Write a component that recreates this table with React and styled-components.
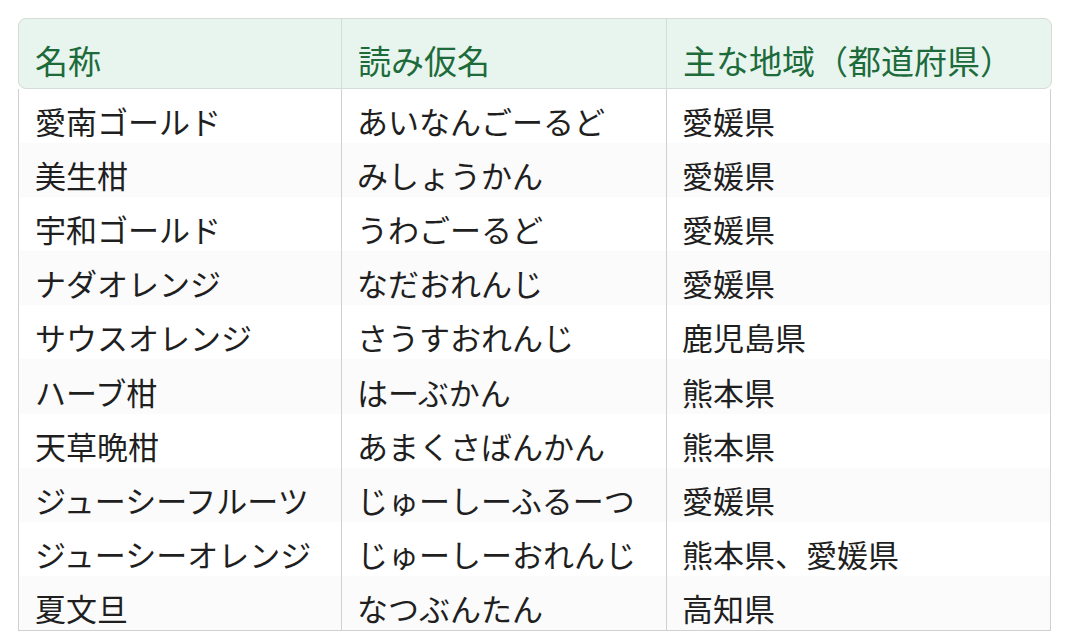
import React from "react";
import styled, { createGlobalStyle } from "styled-components";

const Global = createGlobalStyle`
  html, body { margin: 0; padding: 0; background: #ffffff; }
  body { font-family: "Noto Sans CJK JP", "Noto Sans", sans-serif; }
`;

const Page = styled.div`
  padding: 18px 17px 0 18px;
`;

const Table = styled.div`
  width: 1034px;
`;

const cols = "322px 325px 1fr";

const HeadRow = styled.div`
  display: grid;
  grid-template-columns: ${cols};
  height: 71px;
  box-sizing: border-box;
  border: 1px solid #d3dcd6;
  border-radius: 8px;
  background: #e8f5ee;
`;

const HeadCell = styled.div`
  display: flex;
  align-items: flex-end;
  padding: 0 0 5px 16px;
  font-size: 33px;
  line-height: 46px;
  color: #1d6b3b;
  border-left: ${(p) => (p.$first ? "none" : "1px solid #d3dcd6")};
  white-space: nowrap;
`;

const Body = styled.div`
  border: 1px solid #d0d0d0;
  border-top: none;
  margin-right: 1px;
`;

const Row = styled.div`
  display: grid;
  grid-template-columns: ${cols};
  height: 54.1px;
  background: ${(p) => (p.$striped ? "#fbfbfc" : "#ffffff")};
`;

const Cell = styled.div`
  display: flex;
  align-items: center;
  padding: 10px 0 0 ${(p) => (p.$first ? "16px" : "15px")};
  font-size: 31px;
  line-height: 40px;
  color: #1f1f1f;
  border-left: ${(p) => (p.$first ? "none" : "1px solid #d0d0d0")};
  white-space: nowrap;
`;

const rows = [
  ["愛南ゴールド", "あいなんごーるど", "愛媛県"],
  ["美生柑", "みしょうかん", "愛媛県"],
  ["宇和ゴールド", "うわごーるど", "愛媛県"],
  ["ナダオレンジ", "なだおれんじ", "愛媛県"],
  ["サウスオレンジ", "さうすおれんじ", "鹿児島県"],
  ["ハーブ柑", "はーぶかん", "熊本県"],
  ["天草晩柑", "あまくさばんかん", "熊本県"],
  ["ジューシーフルーツ", "じゅーしーふるーつ", "愛媛県"],
  ["ジューシーオレンジ", "じゅーしーおれんじ", "熊本県、愛媛県"],
  ["夏文旦", "なつぶんたん", "高知県"],
];

export default function App() {
  return (
    <>
      <Global />
      <Page>
        <Table>
          <HeadRow>
            <HeadCell $first>名称</HeadCell>
            <HeadCell>読み仮名</HeadCell>
            <HeadCell>主な地域（都道府県）</HeadCell>
          </HeadRow>
          <Body>
            {rows.map((r, i) => (
              <Row key={i} $striped={i % 2 === 1}>
                {r.map((c, j) => (
                  <Cell key={j} $first={j === 0}>
                    {c}
                  </Cell>
                ))}
              </Row>
            ))}
          </Body>
        </Table>
      </Page>
    </>
  );
}
